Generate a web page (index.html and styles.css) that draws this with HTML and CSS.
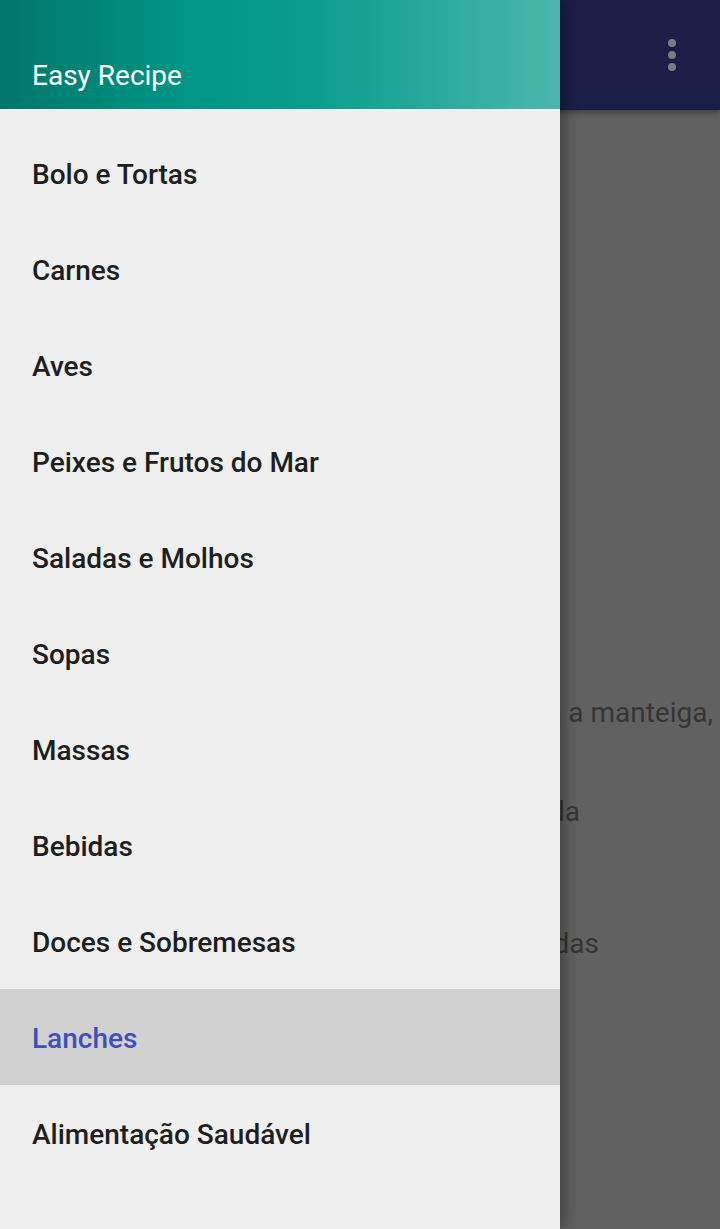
FILE: index.html
```html
<!DOCTYPE html>
<html>
<head>
<meta charset="utf-8">
<link rel="stylesheet" href="styles.css">
</head>
<body>
<div class="screen">
  <div class="app">
    <div class="appbar">
      <div class="overflow"><span></span><span></span><span></span></div>
    </div>
    <div class="content">
      <p class="line l1">Misture a farinha, a manteiga,</p>
      <p class="line l2">e a massa reservada</p>
      <p class="line l3">com as frutas picadas</p>
    </div>
  </div>
  <nav class="drawer">
    <header class="drawer-header">Easy Recipe</header>
    <ul class="menu">
      <li class="item">Bolo e Tortas</li>
      <li class="item">Carnes</li>
      <li class="item">Aves</li>
      <li class="item">Peixes e Frutos do Mar</li>
      <li class="item">Saladas e Molhos</li>
      <li class="item">Sopas</li>
      <li class="item">Massas</li>
      <li class="item">Bebidas</li>
      <li class="item">Doces e Sobremesas</li>
      <li class="item active">Lanches</li>
      <li class="item">Alimentação Saudável</li>
    </ul>
  </nav>
</div>
</body>
</html>
```
FILE: styles.css
```css
html, body {
  margin: 0;
  padding: 0;
}
body {
  font-family: Roboto, "Noto Sans", sans-serif;
  width: 720px;
  height: 1229px;
  overflow: hidden;
}
.screen {
  position: relative;
  width: 720px;
  height: 1229px;
  background: #616161;
  overflow: hidden;
}
.app {
  display: flex;
  flex-direction: column;
  height: 100%;
}
.appbar {
  height: 110px;
  background: #1a1f47;
  display: flex;
  justify-content: flex-end;
  align-items: flex-start;
  box-shadow: 0 3px 6px rgba(0,0,0,0.35);
  position: relative;
  z-index: 1;
}
.overflow {
  display: flex;
  flex-direction: column;
  gap: 4px;
  margin: 39px 44px 0 0;
}
.overflow span {
  width: 8px;
  height: 8px;
  border-radius: 50%;
  background: #787a86;
}
.content {
  padding-top: 587px;
}
.line {
  margin: 0;
  font-size: 28px;
  line-height: 32px;
  color: #353535;
  text-align: right;
  white-space: nowrap;
}
.l1 { padding-right: 7px; }
.l2 { padding-right: 140px; margin-top: 67px; }
.l3 { padding-right: 121px; margin-top: 100px; }
.drawer {
  position: absolute;
  left: 0;
  top: 0;
  width: 560px;
  height: 100%;
  background: #efefef;
  box-shadow: 4px 0 14px rgba(0,0,0,0.35);
  z-index: 2;
}
.drawer-header {
  height: 109px;
  box-sizing: border-box;
  display: flex;
  align-items: flex-end;
  padding: 0 0 17px 32px;
  font-size: 28px;
  line-height: 32px;
  color: #ffffff;
  background: linear-gradient(90deg, #00776a 0%, #009787 35%, #0a9c8d 55%, #2aaa9d 78%, #4db6ac 100%);
}
.menu {
  list-style: none;
  margin: 0;
  padding: 16px 0 0 0;
}
.item {
  height: 96px;
  line-height: 100px;
  padding-left: 32px;
  font-size: 28px;
  font-weight: 500;
  color: #1e1e1e;
}
.item.active {
  background: #d1d1d1;
  color: #3f51b5;
}
```
